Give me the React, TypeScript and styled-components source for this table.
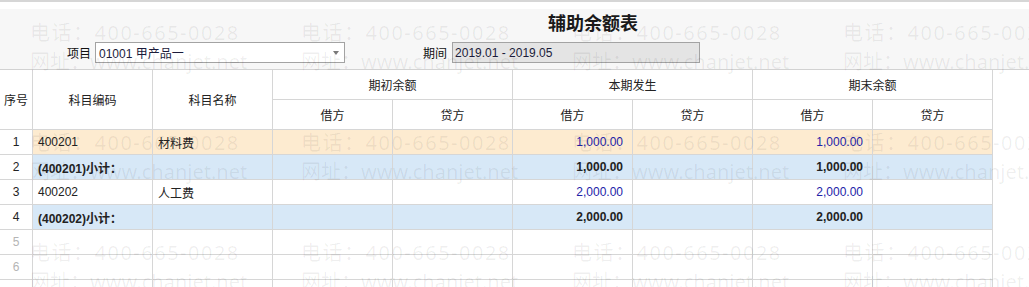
import React from "react";
import styled, { createGlobalStyle } from "styled-components";

const Global = createGlobalStyle`
  html, body { margin: 0; padding: 0; background: #fff; }
  body { font-family: "Liberation Sans", "Noto Sans CJK SC", Arial, sans-serif; font-size: 12px; color: #222; }
`;

const Page = styled.div`
  position: relative;
  box-sizing: border-box;
  width: 1029px;
  height: 287px;
  overflow: hidden;
  border-top: 2px solid #d6d6d6;
`;

const TopGap = styled.div`
  height: 7px;
  background: #fff;
`;

const Panel = styled.div`
  background: #f7f7f7;
  border-bottom: 1px solid #d2d2d2;
  padding: 2px 0 6px 0;
  display: flex;
  flex-direction: column;
  gap: 9px;
`;

const TitleRow = styled.div`
  height: 22px;
  display: flex;
  align-items: center;
  padding-left: 548px;
`;

const Title = styled.h1`
  margin: 0;
  font-size: 18px;
  line-height: 22px;
  font-weight: bold;
  color: #1a1a1a;
  font-family: "Noto Sans CJK SC", sans-serif;
`;

const FilterRow = styled.div`
  display: flex;
  align-items: center;
  height: 21px;
  padding-left: 67px;
`;

const Label = styled.span<{ $gap: number }>`
  font-size: 12px;
  color: #111;
  margin-right: ${(p) => p.$gap}px;
`;

const SelectBox = styled.div`
  box-sizing: border-box;
  width: 250px;
  height: 21px;
  border: 1px solid #a3a3a3;
  background: #fff;
  display: flex;
  align-items: center;
  justify-content: space-between;
  padding: 0 5px 0 3px;
  color: #1b1b3a;
  margin-right: 78px;
`;

const Arrow = styled.span`
  width: 0;
  height: 0;
  border-left: 3.5px solid transparent;
  border-right: 3.5px solid transparent;
  border-top: 4px solid #7a7a7a;
`;

const ReadOnlyBox = styled.div`
  box-sizing: border-box;
  width: 248px;
  height: 21px;
  border: 1px solid #a3a3a3;
  background: #e4e4e4;
  display: flex;
  align-items: center;
  padding: 0 2px;
  color: #1b1b3a;
`;

const Table = styled.table`
  table-layout: fixed;
  width: 993px;
  border-collapse: separate;
  border-spacing: 0;
`;

const HeadRow = styled.tr`
  height: 30px;
`;

const Th = styled.th`
  box-sizing: border-box;
  border-right: 1px solid #d6d6d6;
  border-bottom: 1px solid #d6d6d6;
  background: #fff;
  font-weight: normal;
  font-size: 12px;
  color: #222;
  text-align: center;
  padding: 0;
`;

type Kind = "peach" | "blue" | "plain";

const bgFor = (k: Kind) => (k === "peach" ? "#fdebd0" : k === "blue" ? "#d7e8f7" : "#fff");

const BodyRow = styled.tr<{ $kind: Kind }>`
  height: 25px;
  & > td:not(:first-child) { background: ${(p) => bgFor(p.$kind)}; }
`;

const Td = styled.td<{ $align?: "left" | "right" | "center"; $bold?: boolean; $tone?: "blue" | "muted" | "normal" }>`
  box-sizing: border-box;
  border-right: 1px solid #d6d6d6;
  border-bottom: 1px solid #d6d6d6;
  background: #fff;
  padding: ${(p) => (p.$align === "right" ? "0 9px 0 0" : p.$align === "center" ? "0" : "0 0 0 5px")};
  text-align: ${(p) => p.$align || "left"};
  font-weight: ${(p) => (p.$bold ? "bold" : "normal")};
  color: ${(p) => (p.$tone === "blue" ? "#2222a8" : p.$tone === "muted" ? "#b5b5b5" : "#222")};
  font-size: 12px;
  white-space: nowrap;
  overflow: hidden;
`;

const Watermark = styled.div`
  position: absolute;
  inset: 0;
  pointer-events: none;
  z-index: 2;
  display: grid;
  grid-template-columns: repeat(4, 271px);
  grid-auto-rows: 110px;
  padding: 16px 0 0 30px;
`;

const Tile = styled.div`
  display: flex;
  flex-direction: column;
  font-family: "Noto Sans", "Noto Sans CJK SC", sans-serif;
  font-size: 20px;
  line-height: 29px;
  color: rgba(0, 0, 0, 0.065);
  white-space: nowrap;
`;

const TileLine = styled.span<{ $spacing: number }>`
  letter-spacing: ${(p) => p.$spacing}px;
`;

type Row = {
  kind: Kind;
  code?: string;
  name?: string;
  bold?: boolean;
  cur?: string;
  end?: string;
};

const rows: Row[] = [
  { kind: "peach", code: "400201", name: "材料费", cur: "1,000.00", end: "1,000.00" },
  { kind: "blue", code: "(400201)小计：", bold: true, cur: "1,000.00", end: "1,000.00" },
  { kind: "plain", code: "400202", name: "人工费", cur: "2,000.00", end: "2,000.00" },
  { kind: "blue", code: "(400202)小计：", bold: true, cur: "2,000.00", end: "2,000.00" },
  { kind: "plain" },
  { kind: "plain" },
  { kind: "plain" },
];

export default function App() {
  return (
    <>
      <Global />
      <Page>
        <TopGap />
        <Panel>
          <TitleRow>
            <Title>辅助余额表</Title>
          </TitleRow>
          <FilterRow>
            <Label $gap={4}>项目</Label>
            <SelectBox>
              <span>01001 甲产品一</span>
              <Arrow />
            </SelectBox>
            <Label $gap={5}>期间</Label>
            <ReadOnlyBox>2019.01 - 2019.05</ReadOnlyBox>
          </FilterRow>
        </Panel>
        <Table>
          <colgroup>
            <col style={{ width: 33 }} />
            {Array.from({ length: 8 }).map((_, i) => (
              <col key={i} style={{ width: 120 }} />
            ))}
          </colgroup>
          <thead>
            <HeadRow>
              <Th rowSpan={2}>序号</Th>
              <Th rowSpan={2}>科目编码</Th>
              <Th rowSpan={2}>科目名称</Th>
              <Th colSpan={2}>期初余额</Th>
              <Th colSpan={2}>本期发生</Th>
              <Th colSpan={2}>期末余额</Th>
            </HeadRow>
            <HeadRow>
              <Th>借方</Th>
              <Th>贷方</Th>
              <Th>借方</Th>
              <Th>贷方</Th>
              <Th>借方</Th>
              <Th>贷方</Th>
            </HeadRow>
          </thead>
          <tbody>
            {rows.map((r, i) => {
              const tone = r.bold ? "normal" : "blue";
              return (
                <BodyRow key={i} $kind={r.kind}>
                  <Td $align="center" $tone={r.code ? "normal" : "muted"}>{i < 6 ? i + 1 : ""}</Td>
                  <Td $bold={r.bold}>{r.code}</Td>
                  <Td>{r.name}</Td>
                  <Td $align="right" />
                  <Td $align="right" />
                  <Td $align="right" $bold={r.bold} $tone={tone}>{r.cur}</Td>
                  <Td $align="right" />
                  <Td $align="right" $bold={r.bold} $tone={tone}>{r.end}</Td>
                  <Td $align="right" />
                </BodyRow>
              );
            })}
          </tbody>
        </Table>
        <Watermark>
          {Array.from({ length: 12 }).map((_, i) => (
            <Tile key={i}>
              <TileLine $spacing={1.5}>电话：400-665-0028</TileLine>
              <TileLine $spacing={0}>网址：www.chanjet.net</TileLine>
            </Tile>
          ))}
        </Watermark>
      </Page>
    </>
  );
}
